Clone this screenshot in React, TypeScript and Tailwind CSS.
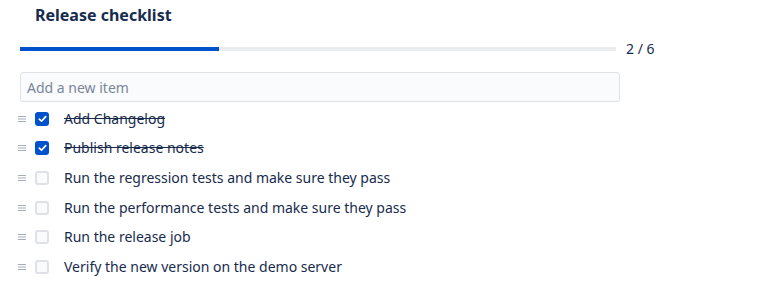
const items = [
  { label: 'Add Changelog', done: true },
  { label: 'Publish release notes', done: true },
  { label: 'Run the regression tests and make sure they pass', done: false },
  { label: 'Run the performance tests and make sure they pass', done: false },
  { label: 'Run the release job', done: false },
  { label: 'Verify the new version on the demo server', done: false },
]

function DragHandle() {
  return (
    <svg width="8" height="8" viewBox="0 0 8 8" className="-ml-[2px] shrink-0 text-[#a5adba]">
      <rect x="0" y="1" width="8" height="1" fill="currentColor" />
      <rect x="0" y="3.5" width="8" height="1" fill="currentColor" />
      <rect x="0" y="6" width="8" height="1" fill="currentColor" />
    </svg>
  )
}

function Checkbox({ checked }: { checked: boolean }) {
  if (checked) {
    return (
      <span className="ml-[9px] flex size-[14px] shrink-0 items-center justify-center rounded-[3px] bg-[#0052cc]">
        <svg width="9" height="8" viewBox="0 0 9 8">
          <path d="M1.3 4.2 L3.5 6.2 L7.7 1.6" fill="none" stroke="white" strokeWidth="1.7" strokeLinecap="round" strokeLinejoin="round" />
        </svg>
      </span>
    )
  }
  return <span className="ml-[9px] block size-[14px] shrink-0 rounded-[3px] border-2 border-[#dfe1e6] bg-[#fafbfc]" />
}

export default function App() {
  const done = items.filter((i) => i.done).length
  const pct = (done / items.length) * 100

  return (
    <div className="h-[306px] w-[763px] bg-white pl-5 text-[#172b4d] [font-family:'Noto_Sans',sans-serif]">
      <h1 className="pl-[15px] pt-[3px] text-[16px] leading-[24px] font-bold">Release checklist</h1>

      <div className="mt-[12px] flex items-center">
        <div className="h-[4px] w-[596px] bg-[#ebecf0]">
          <div className="h-full bg-[#0052cc]" style={{ width: `${pct}%` }} />
        </div>
        <span className="ml-[10px] text-[14px] leading-[20px]">
          {done} / {items.length}
        </span>
      </div>

      <input
        placeholder="Add a new item"
        className="mt-[13px] block h-[30px] w-[600px] rounded-[3px] border border-[#dfe1e6] bg-[#fafbfc] px-[6px] text-[14px] outline-none placeholder:text-[#7a869a]"
      />

      <ul className="mt-[2px]">
        {items.map((item) => (
          <li key={item.label} className="flex h-[29.6px] items-center">
            <DragHandle />
            <Checkbox checked={item.done} />
            <span className={`ml-[15px] text-[14px] leading-[20px] ${item.done ? 'line-through' : ''}`}>
              {item.label}
            </span>
          </li>
        ))}
      </ul>
    </div>
  )
}
